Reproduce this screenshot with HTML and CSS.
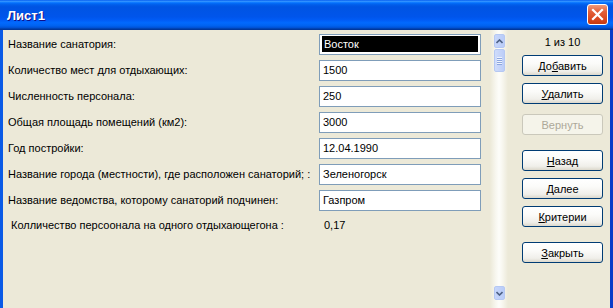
FILE: index.html
```html
<!DOCTYPE html>
<html lang="ru">
<head>
    <meta charset="UTF-8">
    <title>Лист1</title>
    <link rel="stylesheet" href="styles.css">
</head>
<body>

<div class="window">
    <!-- Заголовок окна -->
    <div class="titlebar">
        <span class="title">Лист1</span>
        <span class="close">
            <svg width="13" height="13" viewBox="0 0 13 13"><path d="M2 2 L11 11 M11 2 L2 11" stroke="#fff" stroke-width="2.2" stroke-linecap="square"/></svg>
        </span>
    </div>

    <div class="body">
        <!-- Поля формы -->
        <div class="fields">
            <div class="row"><span class="label">Название санатория:</span><div class="field"><span class="sel">Восток</span></div></div>
            <div class="row"><span class="label">Количество мест для отдыхающих:</span><div class="field">1500</div></div>
            <div class="row"><span class="label">Численность персонала:</span><div class="field">250</div></div>
            <div class="row"><span class="label">Общая площадь помещений (км2):</span><div class="field">3000</div></div>
            <div class="row"><span class="label">Год постройки:</span><div class="field">12.04.1990</div></div>
            <div class="row"><span class="label">Название города (местности), где расположен санаторий; :</span><div class="field">Зеленогорск</div></div>
            <div class="row"><span class="label">Название ведомства, которому санаторий подчинен:</span><div class="field">Газпром</div></div>
            <div class="row calc"><span class="label">Колличество персоонала на одного отдыхающегона :</span><span class="value">0,17</span></div>
        </div>

        <!-- Полоса прокрутки -->
        <div class="scrollbar">
            <div class="sb-btn">
                <svg width="7" height="5" viewBox="0 0 7 5"><path d="M0.5 4 L3.5 1 L6.5 4" fill="none" stroke="#4d6185" stroke-width="1.6"/></svg>
            </div>
            <div class="sb-thumb">
                <span></span><span></span><span></span><span></span>
            </div>
            <div class="sb-track"></div>
            <div class="sb-btn">
                <svg width="7" height="5" viewBox="0 0 7 5"><path d="M0.5 1 L3.5 4 L6.5 1" fill="none" stroke="#4d6185" stroke-width="1.6"/></svg>
            </div>
        </div>

        <!-- Кнопки навигации -->
        <div class="panel">
            <div class="counter">1 из 10</div>
            <button class="btn">До<u>б</u>авить</button>
            <button class="btn"><u>У</u>далить</button>
            <button class="btn disabled">Вернуть</button>
            <button class="btn group"><u>Н</u>азад</button>
            <button class="btn"><u>Д</u>алее</button>
            <button class="btn"><u>К</u>ритерии</button>
            <button class="btn group"><u>З</u>акрыть</button>
        </div>
    </div>
</div>

</body>
</html>
```

FILE: styles.css
```css
body {
    margin: 0;
    font-family: "Liberation Sans", Arial, sans-serif;
    font-size: 11px;
    color: #000;
    background: #ece9d8;
    overflow: hidden;
}
.window {
    width: 613px;
    height: 308px;
    display: flex;
    flex-direction: column;
}

/* Заголовок в стиле XP */
.titlebar {
    height: 30px;
    flex: none;
    display: flex;
    align-items: center;
    justify-content: space-between;
    padding: 0 5px 0 7px;
    box-sizing: border-box;
    background: linear-gradient(to bottom, #0058ee 0%, #3593ff 4%, #288eff 6%, #127dff 8%, #036ffc 10%, #0262ee 14%, #0057e5 20%, #0054e3 24%, #0055eb 56%, #005bf5 66%, #026afe 76%, #0062ef 86%, #0052d6 92%, #0040ab 96%, #003092 100%);
}
.title {
    color: #fff;
    font-weight: bold;
    font-size: 13px;
    text-shadow: 1px 1px #0f1089;
}
.close {
    width: 21px;
    height: 21px;
    box-sizing: border-box;
    border: 1px solid #fff;
    border-radius: 3px;
    display: flex;
    align-items: center;
    justify-content: center;
    margin-top: -1px;
    background: linear-gradient(to bottom, #f19a7b 0%, #e2603a 35%, #d8471f 75%, #c4390f 100%);
}

.body {
    flex: 1;
    display: flex;
    border-left: 3px solid #0a5ae6;
    border-right: 3px solid #0a3bc8;
    background: #ece9d8;
}

/* Поля */
.fields {
    width: 487px;
    padding: 1px 0 0 5px;
    box-sizing: border-box;
}
.row {
    height: 26px;
    display: flex;
    align-items: flex-start;
}
.label {
    width: 311px;
    flex: none;
    line-height: 13px;
    margin-top: 7px;
    white-space: nowrap;
}
.field {
    width: 162px;
    height: 21px;
    margin-top: 3px;
    box-sizing: border-box;
    border: 1px solid #7f9db9;
    background: #fff;
    padding: 0 3px;
    line-height: 19px;
}
.field .sel {
    display: block;
    margin: 1px -1px;
    padding: 0 2px;
    height: 16px;
    line-height: 16px;
    background: #000;
    color: #fff;
}
.calc .label {
    margin-top: 6px;
    padding-left: 3px;
    width: 308px;
}
.calc .value {
    margin: 6px 0 0 5px;
    line-height: 13px;
}

/* Полоса прокрутки */
.scrollbar {
    width: 18px;
    flex: none;
    display: flex;
    flex-direction: column;
    align-items: center;
    padding: 4px 0 8px;
    box-sizing: border-box;
    background: linear-gradient(to right, #ece9d8 0%, #f7f6ee 30%, #fdfdfa 50%, #f7f6ee 70%, #ece9d8 100%);
}
.sb-btn {
    width: 11px;
    height: 14px;
    flex: none;
    box-sizing: border-box;
    border: 1px solid #b5c8f3;
    border-radius: 2px;
    background: linear-gradient(to right, #c7d6fb, #b9ccf8);
    display: flex;
    align-items: center;
    justify-content: center;
}
.sb-thumb {
    width: 11px;
    height: 23px;
    margin-top: 1px;
    box-sizing: border-box;
    border: 1px solid #b5c8f3;
    border-radius: 2px;
    background: linear-gradient(to right, #cfdcfb, #bccdf8);
    display: flex;
    flex-direction: column;
    align-items: center;
    justify-content: center;
    gap: 1px;
}
.sb-thumb span {
    width: 5px;
    height: 1px;
    background: #eef3fe;
    box-shadow: 0 1px #8ca6de;
}
.sb-track {
    flex: 1;
}

/* Кнопки */
.panel {
    flex: 1;
    display: flex;
    flex-direction: column;
    padding: 6px 0 0 14px;
}
.counter {
    width: 81px;
    text-align: center;
    line-height: 13px;
}
.btn {
    width: 81px;
    height: 21px;
    margin-top: 7px;
    padding: 0;
    font-family: inherit;
    font-size: 11px;
    color: #000;
    border: 1px solid #003c74;
    border-radius: 3px;
    background: linear-gradient(to bottom, #ffffff 0%, #fbfbf9 40%, #f0efea 80%, #dcd8cc 100%);
}
.btn:first-of-type {
    margin-top: 6px;
}
.btn.disabled {
    margin-top: 10px;
    color: #aca899;
    border-color: #cac8bb;
    background: #f5f4ea;
}
.btn.group {
    margin-top: 15px;
}
.btn u {
    text-underline-offset: 1px;
}
```
